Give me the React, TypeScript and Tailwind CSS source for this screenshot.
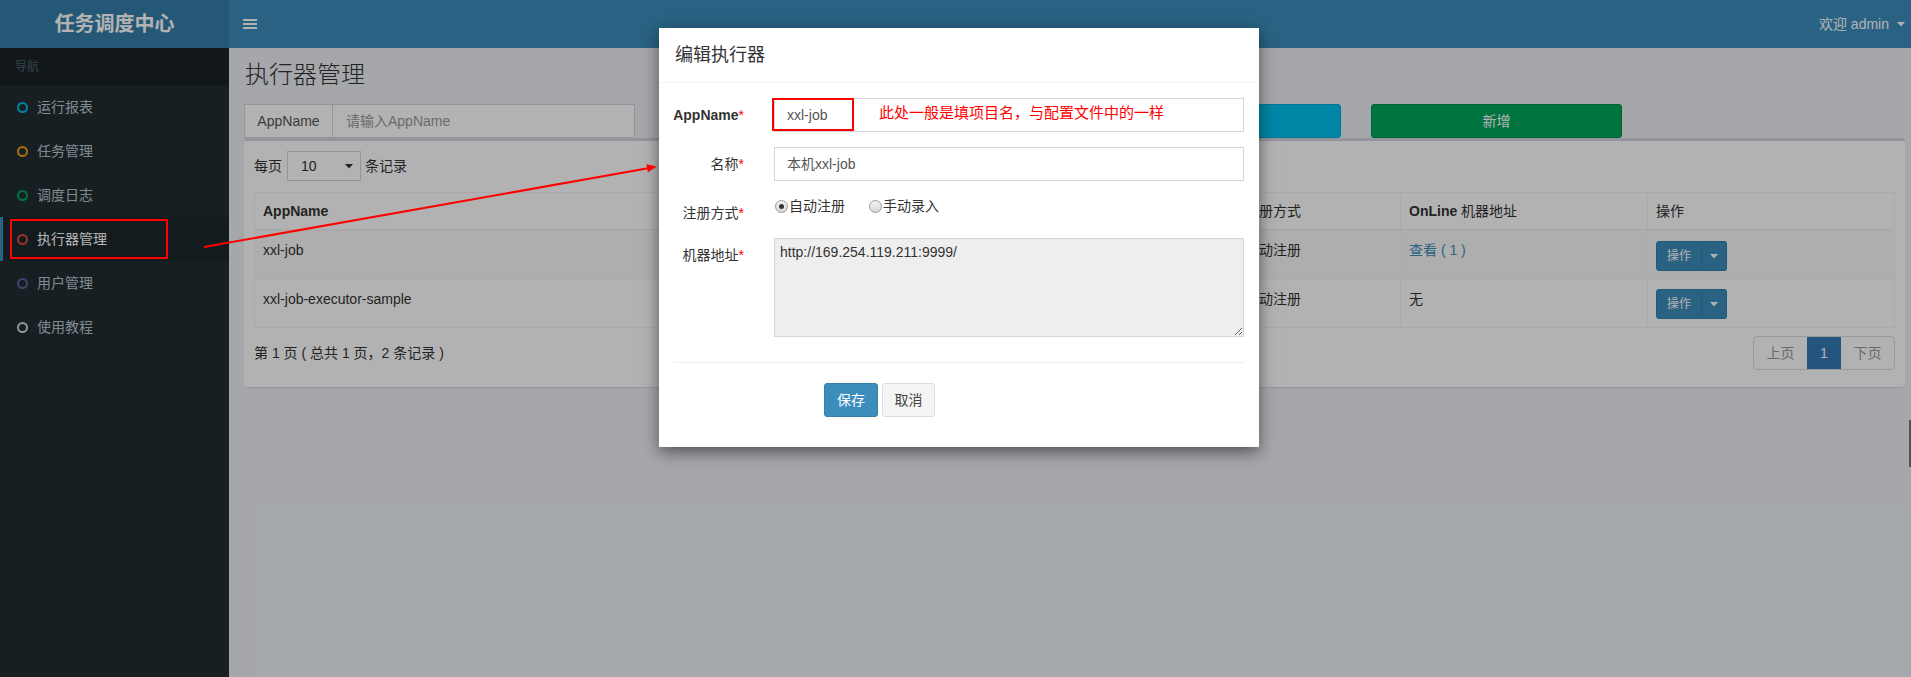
import React from "react";

const menu = [
  { label: "运行报表", color: "border-[#00c0ef]" },
  { label: "任务管理", color: "border-[#f39c12]" },
  { label: "调度日志", color: "border-[#00a65a]" },
  { label: "执行器管理", color: "border-[#dd4b39]", active: true },
  { label: "用户管理", color: "border-[#605ca8]" },
  { label: "使用教程", color: "border-[#d2d6de]" },
];

function Caret({ className }: { className: string }) {
  return (
    <svg width="8" height="5" viewBox="0 0 8 5" className={className}>
      <polygon points="0,0 8,0 4,4.5" fill="currentColor" />
    </svg>
  );
}

function SplitButton() {
  return (
    <div className="inline-flex h-[30px] text-white text-[12px]">
      <div className="w-[46px] flex items-center justify-center bg-[#3c8dbc] border border-[#367fa9] rounded-l-[3px]">
        操作
      </div>
      <div className="w-[25px] flex items-center justify-center bg-[#3c8dbc] border border-l-0 border-[#367fa9] rounded-r-[3px]">
        <Caret className="text-white" />
      </div>
    </div>
  );
}

function Radio({ checked }: { checked?: boolean }) {
  return (
    <span className="w-[13px] h-[13px] rounded-full border border-[#9a9a9a] bg-gradient-to-b from-[#f4f4f4] to-[#d8d8d8] flex items-center justify-center">
      {checked && <span className="w-[5px] h-[5px] rounded-full bg-[#333]" />}
    </span>
  );
}

const cell = "px-[8px] pt-[9px] leading-[20px] align-top border border-[#f4f4f4]";
const head = "px-[8px] py-[8px] leading-[20px] font-normal border border-[#f4f4f4] border-b-2";

export default function App() {
  return (
    <div className="relative w-[1911px] h-[677px] overflow-hidden bg-[#ecf0f5] text-[14px] text-[#333] [font-family:'Liberation_Sans','Noto_Sans_CJK_SC',sans-serif]">
      <div className="flex h-full">
        {/* Sidebar */}
        <div className="w-[229px] flex flex-col shrink-0">
          <div className="h-[48px] bg-[#367fa9] flex items-center justify-center text-white text-[20px] font-bold">
            任务调度中心
          </div>
          <div className="flex-1 bg-[#222d32]">
            <div className="h-[37px] bg-[#1a2226] text-[#4b646f] text-[12px] pl-[15px] flex items-center">
              导航
            </div>
            {menu.map((m) => (
              <div
                key={m.label}
                className={
                  m.active
                    ? "h-[44px] flex items-center pl-[14px] border-l-[3px] border-[#3c8dbc] bg-[#1e282c] text-white"
                    : "h-[44px] flex items-center pl-[17px] text-[#b8c7ce]"
                }
              >
                <span className="w-[20px] flex items-center">
                  <span className={"w-[11px] h-[11px] rounded-full border-2 " + m.color} />
                </span>
                <span>{m.label}</span>
              </div>
            ))}
          </div>
        </div>

        {/* Main */}
        <div className="flex-1 flex flex-col">
          <div className="h-[48px] bg-[#3c8dbc] flex items-center justify-between text-white">
            <svg width="14" height="10" viewBox="0 0 14 10" className="ml-[14px]">
              <rect x="0" y="0" width="14" height="2" fill="white" />
              <rect x="0" y="4" width="14" height="2" fill="white" />
              <rect x="0" y="8" width="14" height="2" fill="white" />
            </svg>
            <div className="flex items-center pr-[8px]">
              <span>欢迎 admin</span>
              <Caret className="ml-[8px] text-white" />
            </div>
          </div>

          <div className="flex-1 pl-[15px] pr-[8px] pt-[14px]">
            <div className="text-[24px] leading-[26px] pl-[1px] font-light text-[#333]">执行器管理</div>
            <div className="flex h-[34px] mt-[16px]">
              <div className="flex w-[391px] border border-[#d2d6de] bg-white">
                <div className="w-[88px] flex items-center justify-center border-r border-[#d2d6de] text-[#555]">
                  AppName
                </div>
                <div className="flex-1 flex items-center pl-[13px] text-[#999]">请输入AppName</div>
              </div>
              <div className="ml-[456px] w-[250px] bg-[#00c0ef] border border-[#00acd6] rounded-[3px]" />
              <div className="ml-[30px] w-[251px] bg-[#00a65a] border border-[#008d4c] rounded-[3px] flex items-center justify-center text-white">
                新增
              </div>
            </div>

            <div className="bg-white border-t-[3px] border-[#d2d6de] rounded-[3px] shadow-[0_1px_1px_rgba(0,0,0,0.1)] px-[10px] pt-[10px] pb-[17px]">
              <div className="flex items-center h-[30px]">
                <span>每页</span>
                <div className="ml-[5px] w-[74px] h-[30px] border border-[#d2d6de] flex items-center justify-between pl-[13px] pr-[7px]">
                  <span>10</span>
                  <Caret className="text-[#333]" />
                </div>
                <span className="ml-[4px]">条记录</span>
              </div>

              <table className="mt-[11px] w-full table-fixed border-collapse border border-[#f4f4f4]">
                <colgroup>
                  <col className="w-[506px]" />
                  <col className="w-[240px]" />
                  <col className="w-[236px]" />
                  <col className="w-[164px]" />
                  <col className="w-[247px]" />
                  <col className="w-[247px]" />
                </colgroup>
                <thead>
                  <tr className="text-left">
                    <th className={head + " !font-bold"}>AppName</th>
                    <th className={head}></th>
                    <th className={head}></th>
                    <th className={head}>注册方式</th>
                    <th className={head}>
                      <span className="font-bold">OnLine</span> 机器地址
                    </th>
                    <th className={head}>操作</th>
                  </tr>
                </thead>
                <tbody>
                  <tr className="bg-[#f9f9f9]">
                    <td className={cell + " pb-[18px]"}>xxl-job</td>
                    <td className={cell}></td>
                    <td className={cell}></td>
                    <td className={cell}>自动注册</td>
                    <td className={cell + " text-[#3c8dbc]"}>查看 ( 1 )</td>
                    <td className="px-[8px] pt-[10px] pb-[8px] align-top border border-[#f4f4f4]">
                      <SplitButton />
                    </td>
                  </tr>
                  <tr>
                    <td className={cell}>xxl-job-executor-sample</td>
                    <td className={cell}></td>
                    <td className={cell}></td>
                    <td className={cell}>自动注册</td>
                    <td className={cell}>无</td>
                    <td className="px-[8px] pt-[9px] pb-[8px] align-top border border-[#f4f4f4]">
                      <SplitButton />
                    </td>
                  </tr>
                </tbody>
              </table>

              <div className="flex items-center justify-between mt-[8px]">
                <span>第 1 页 ( 总共 1 页，2 条记录 )</span>
                <div className="flex h-[34px] border border-[#ddd] rounded-[4px] overflow-hidden text-[#999]">
                  <div className="w-[53px] flex items-center justify-center">上页</div>
                  <div className="w-[34px] flex items-center justify-center bg-[#337ab7] text-white">1</div>
                  <div className="w-[53px] flex items-center justify-center">下页</div>
                </div>
              </div>
            </div>
          </div>
        </div>
      </div>

      {/* Backdrop */}
      <div className="absolute inset-0 bg-black/30" />

      {/* Modal */}
      <div className="absolute left-[659px] top-[28px] w-[600px] bg-white shadow-[0_5px_15px_rgba(0,0,0,0.5)]">
        <div className="h-[55px] px-[16px] flex items-center text-[18px] text-[#333] border-b border-[#f4f4f4]">
          编辑执行器
        </div>
        <div className="px-[15px] pt-[15px] pb-[30px]">
          <div className="-mx-[15px] flex mb-[15px]">
            <div className="w-[100px] pr-[15px] pt-[7px] leading-[20px] text-right font-bold">
              AppName<span className="text-[#f00] font-normal">*</span>
            </div>
            <div className="flex-1 px-[15px]">
              <div className="h-[34px] border border-[#d2d6de] flex items-center pl-[12px] text-[#555]">xxl-job</div>
            </div>
          </div>
          <div className="-mx-[15px] flex mb-[15px]">
            <div className="w-[100px] pr-[15px] pt-[7px] leading-[20px] text-right">
              名称<span className="text-[#f00]">*</span>
            </div>
            <div className="flex-1 px-[15px]">
              <div className="h-[34px] border border-[#d2d6de] flex items-center pl-[12px] text-[#555]">本机xxl-job</div>
            </div>
          </div>
          <div className="-mx-[15px] flex mb-[15px]">
            <div className="w-[100px] pr-[15px] pt-[7px] leading-[20px] text-right">
              注册方式<span className="text-[#f00]">*</span>
            </div>
            <div className="flex-1 px-[15px]">
              <div className="flex items-center h-[20px] pl-[1px]">
                <Radio checked />
                <span className="ml-[1px]">自动注册</span>
                <span className="ml-[24px]">
                  <Radio />
                </span>
                <span className="ml-[1px]">手动录入</span>
              </div>
            </div>
          </div>
          <div className="-mx-[15px] flex">
            <div className="w-[100px] pr-[15px] pt-[7px] leading-[20px] text-right">
              机器地址<span className="text-[#f00]">*</span>
            </div>
            <div className="flex-1 px-[15px]">
              <textarea
                readOnly
                defaultValue="http://169.254.119.211:9999/"
                className="block w-full h-[99px] border border-[#d2d6de] bg-[#eeeeee] px-[5px] pt-[3px] text-[14px] leading-[20px] text-[#333] outline-none resize-y"
              />
            </div>
          </div>
          <div className="mt-[25px] h-px bg-[#eeeeee]" />
          <div className="mt-[20px] flex ml-[150px]">
            <div className="w-[54px] h-[34px] bg-[#3c8dbc] border border-[#367fa9] rounded-[3px] text-white flex items-center justify-center">
              保存
            </div>
            <div className="ml-[4px] w-[53px] h-[34px] bg-[#f4f4f4] border border-[#ddd] rounded-[3px] text-[#444] flex items-center justify-center">
              取消
            </div>
          </div>
        </div>
      </div>

      {/* Right edge bar */}
      <div className="absolute right-0 top-[420px] w-[2px] h-[47px] bg-[#505458]" />

      {/* Annotations */}
      <div className="absolute left-[10px] top-[219px] w-[158px] h-[40px] border-2 border-[#f00]" />
      <div className="absolute left-[772px] top-[98px] w-[82px] h-[33px] border-2 border-[#f00]" />
      <div className="absolute left-[879px] top-[103px] text-[15px] leading-[20px] text-[#f00] whitespace-nowrap">
        此处一般是填项目名，与配置文件中的一样
      </div>
      <svg className="absolute left-0 top-0" width="1911" height="677" viewBox="0 0 1911 677">
        <line x1="204" y1="247" x2="648" y2="168.3" stroke="#f00" strokeWidth="2" />
        <polygon points="657,166.6 647.9,172.2 646.4,164.3" fill="#f00" />
      </svg>
    </div>
  );
}
